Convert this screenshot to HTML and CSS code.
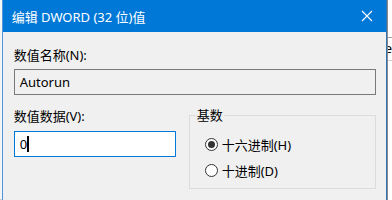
FILE: index.html
```html
<!DOCTYPE html>
<html lang="zh-CN">
<head>
    <meta charset="UTF-8">
    <meta name="viewport" content="width=device-width, initial-scale=1.0">
    <title>编辑 DWORD (32 位)值</title>
    <link rel="stylesheet" href="styles.css">
</head>
<body>
    <div class="desk">
        <div class="side-left"></div>

        <div class="dialog">
            <div class="titlebar">
                <span class="title">编辑 DWORD (32 位)值</span>
                <svg class="close" width="12" height="12" viewBox="0 0 12 12">
                    <path d="M1 1 L11 11 M11 1 L1 11" stroke="#fff" stroke-width="1.1" fill="none"/>
                </svg>
            </div>

            <div class="content">
                <div class="label">数值名称(N):</div>
                <div class="field field-readonly">Autorun</div>

                <div class="row">
                    <div class="data-col">
                        <div class="label">数值数据(V):</div>
                        <div class="field field-focus">0<span class="caret"></span></div>
                    </div>

                    <fieldset class="group">
                        <legend>基数</legend>
                        <div class="radio-row">
                            <span class="radio checked"></span>
                            <span>十六进制(H)</span>
                        </div>
                        <div class="radio-row">
                            <span class="radio"></span>
                            <span>十进制(D)</span>
                        </div>
                    </fieldset>
                </div>
            </div>
        </div>

        <div class="side-right">
            <div class="list-head">e</div>
        </div>
    </div>
</body>
</html>
```

FILE: styles.css
```css
body {
  margin: 0;
  padding: 0;
  background: #f0f0f0;
  font-family: "Noto Sans", "Noto Sans CJK SC", sans-serif;
  font-size: 13px;
  color: #000;
}

.desk {
  display: flex;
  height: 200px;
  overflow: hidden;
}

.side-left {
  width: 3px;
  background: #f5f5f5;
  border-top: 24px solid #f7f7f7;
  box-shadow: inset 0 -1px 0 #d0d0d0;
}

.dialog {
  width: 383px;
  flex: none;
  background: #f0f0f0;
  border-left: 1px solid #4a98da;
  border-right: 1px solid #2f73b8;
}

.titlebar {
  height: 32px;
  background: #0078d7;
  display: flex;
  align-items: center;
  padding-left: 9px;
  padding-right: 9px;
}

.title {
  flex: 1;
  color: #fff;
  font-size: 13px;
  line-height: 16px;
  margin-top: 1px;
}

.close {
  margin-right: 4px;
}

.content {
  padding: 15px 10px 0 11px;
}

.label {
  line-height: 16px;
  height: 16px;
  white-space: nowrap;
}

.field {
  box-sizing: border-box;
  height: 26px;
  margin-top: 6px;
  padding-left: 5px;
  line-height: 24px;
  border: 1px solid #7a7a7a;
  display: flex;
  align-items: center;
}

.field-readonly {
  background: #f0f0f0;
}

.field-focus {
  background: #fff;
  border-color: #0078d7;
  margin-top: 7px;
}

.caret {
  display: inline-block;
  width: 2px;
  height: 16px;
  background: #000;
  margin-left: 0;
}

.row {
  display: flex;
  margin-top: 13px;
  gap: 13px;
}

.data-col {
  width: 162px;
}

.group {
  flex: 1;
  margin: 0;
  padding: 9px 0 5px 6px;
  border: 1px solid #dcdcdc;
  min-width: 0;
}

.group legend {
  padding: 0 1px;
  line-height: 14px;
}

.radio-row {
  display: flex;
  align-items: center;
  height: 26px;
  padding-left: 9px;
  gap: 4px;
  white-space: nowrap;
}

.radio {
  box-sizing: border-box;
  width: 13px;
  height: 13px;
  border: 1px solid #333;
  border-radius: 50%;
  background: #fff;
  display: flex;
  align-items: center;
  justify-content: center;
}

.radio.checked::after {
  content: "";
  width: 7px;
  height: 7px;
  border-radius: 50%;
  background: #333;
}

.side-right {
  flex: 1;
  background: #fff;
  border-left: 1px solid #8a8a8a;
}

.list-head {
  margin-top: 37px;
  height: 22px;
  line-height: 20px;
  border-top: 1px solid #a0a0a0;
  border-bottom: 1px solid #d0d0d0;
  text-indent: -3px;
  overflow: hidden;
}
```
